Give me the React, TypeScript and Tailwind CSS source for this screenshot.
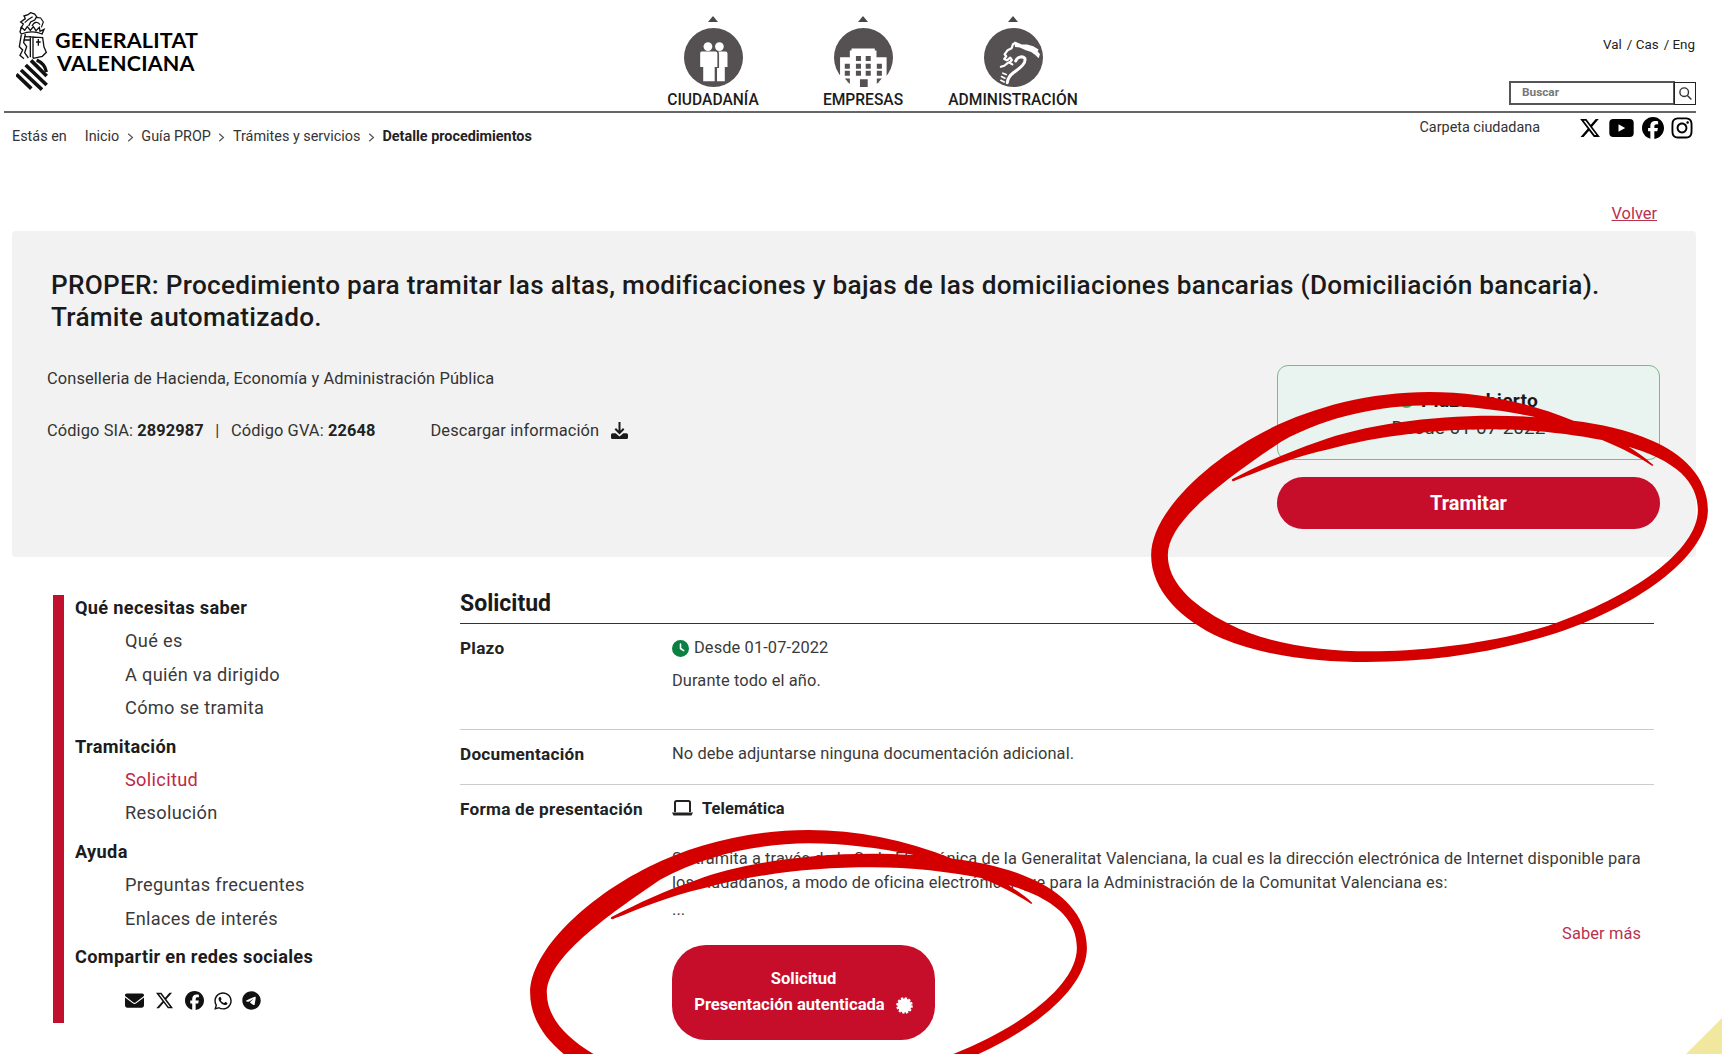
import type { ReactNode } from "react";
import {
  FaClock,
  FaEnvelope,
  FaFacebook,
  FaInstagram,
  FaTelegram,
  FaWhatsapp,
  FaXTwitter,
} from "react-icons/fa6";

const sections = [
  { title: "Qué necesitas saber", items: ["Qué es", "A quién va dirigido", "Cómo se tramita"] },
  { title: "Tramitación", items: ["Solicitud", "Resolución"] },
  { title: "Ayuda", items: ["Preguntas frecuentes", "Enlaces de interés"] },
];

function Crest() {
  return (
    <svg width={32} height={80} viewBox="0 0 96 240" fill="none" stroke="#111" strokeWidth={4}>
      {/* helmet with the winged dragon */}
      <path d="M14 50 22 36 14 30 28 20 24 12 36 8 44 2 56 6 62 14 56 24 44 30 38 42" />
      <path d="M26 32 38 22 50 14M60 16 74 18 82 30 76 46M48 42C54 28 66 28 72 38" strokeWidth={3.5} />
      <path d="M12 60 16 46 26 55 34 44 43 55 52 44 60 56 70 46 72 58 84 52 78 66C56 56 36 58 16 66Z" strokeWidth={4} />
      {/* mantle */}
      <path d="M16 68 10 104 20 114 12 130 24 140M28 66 23 92 32 104 26 122 37 138" />
      <path d="M43 72V136M51 72V139M26 74 80 77 84 105 91 121 79 133 51 139M23 84H43" />
      <path d="M67 81V101M60 90H74" strokeWidth={4} />
      {/* shield bars */}
      <path d="M45 145 92 192M29 159 92 219M15 174 78 233M1 187 46 230" strokeWidth={11} />
      <path d="M62 144C78 151 88 162 91 180" strokeWidth={10} />
    </svg>
  );
}

function PeopleIcon() {
  return (
    <svg width={59} height={59} viewBox="0 0 175 175">
      <circle cx={87.5} cy={87.5} r={87.5} fill="#555152" />
      <g fill="#fff">
        <circle cx={71} cy={55} r={13} />
        <circle cx={105} cy={55} r={13} />
        <path d="M52 70h41q6 0 6 6v40h-8v42H57v-42h-9V75q0-5 4-5ZM102 70h21q6 0 6 6v40h-8v42H98v-39h6V79q0-6-2-9Z" />
      </g>
    </svg>
  );
}

function BuildingIcon() {
  return (
    <svg width={59} height={59} viewBox="0 0 175 175">
      <circle cx={87.5} cy={87.5} r={87.5} fill="#555152" />
      <path d="M18 87H47V67H52V61H121V67H126V87H156V160H132V175H43V160H18Z" fill="#fff" />
      <path
        d="M32 106h15v15H32zM65 83h15v15H65zM94 83h15v15H94zM65 106h15v15H65zM94 106h15v15H94zM127 106h15v15H127zM32 127h15v15H32zM65 127h15v15H65zM94 127h15v15H94zM127 127h15v15H127zM32 150h15v16zM127 150h15l-15 16zM77 152h23v23H77z"
        fill="#555152"
      />
    </svg>
  );
}

function DragonIcon() {
  return (
    <svg width={59} height={59} viewBox="0 0 175 175">
      <circle cx={87.5} cy={87.5} r={87.5} fill="#555152" />
      <path
        d="M90 40 100 44 112 49 128 49 146 54 162 64 159 69 166 78 162 90 153 81 140 71 124 66 106 58 92 56Z"
        fill="#fff"
      />
      <g fill="none" stroke="#fff" strokeWidth={6.5} strokeLinejoin="round" strokeLinecap="round">
        <path d="M93 44 86 48 82 60 70 66 61 78 66 84 60 92 68 96 78 88 83 95 76 102" />
        <path d="M70 104 60 112 50 115M74 102 84 108" />
        <path
          d="M94 98C98 86 114 82 121 90 126 104 106 120 88 132 76 141 70 150 69 162"
          strokeWidth={9}
        />
        <path d="M56 134 66 138M52 144 62 149M50 155 60 160" strokeWidth={5} />
      </g>
    </svg>
  );
}

function YoutubeIcon({ className }: { className: string }) {
  return (
    <svg width={25} height={18} viewBox="0 0 25 18" className={className}>
      <rect x={0.3} width={24.4} height={18} rx={4} fill="currentColor" />
      <path d="M9.5 5.200 16.200 9 9.500 12.800Z" fill="#fff" />
    </svg>
  );
}

function Audience({ label, icon, className }: { label: string; icon: ReactNode; className: string }) {
  return (
    <a href="#" className={`flex flex-col items-center ${className}`}>
      <svg width={10} height={6} viewBox="0 0 10 6" className="mb-1.5">
        <path d="M5 0 10 6H0Z" fill="#4a4748" />
      </svg>
      {icon}
      <span className="mt-[3px] text-[15.6px] leading-5 font-medium whitespace-nowrap">{label}</span>
    </a>
  );
}

/* Hand-drawn marker loop */
function MarkerLoop({ className }: { className: string }) {
  return (
    <svg
      width={582}
      height={330}
      viewBox="0 0 1568 990"
      preserveAspectRatio="none"
      className={`pointer-events-none absolute ${className}`}
    >
      <path
        fill="#d40000"
        d="M1383 345C1330 290 1240 240 1168 212C1040 155 910 126 780 126C620 126 470 170 350 236C180 330 30 490 30 615C30 720 110 810 220 865C340 920 480 936 610 936C800 936 960 905 1120 850C1360 760 1530 610 1530 480C1530 380 1460 310 1380 272C1310 237 1240 222 1168 212C1090 202 1020 197 950 197C780 197 600 225 480 275C400 305 320 345 248 388C246 393 250 396 258 391C320 365 400 325 500 300C650 255 800 238 950 238C1060 238 1160 252 1245 270L1300 285C1450 330 1503 400 1503 480C1503 600 1330 740 1100 827C950 880 760 904 620 904C480 904 340 880 240 822C130 760 75 690 75 615C75 510 235 385 380 275C510 196 650 167 780 166C870 166 970 180 1060 200C1140 225 1200 245 1245 270C1300 295 1350 325 1380 348Z"
      />
    </svg>
  );
}

function Header() {
  return (
    <header className="ml-1 flex h-[113px] w-[1692px] border-b-2 border-[#666]">
      <div className="ml-3 flex w-[190px] items-start pt-3">
        <Crest />
        <p className="mt-[17px] ml-[7px] font-[Lato] text-[21.5px] leading-[23px] font-bold tracking-[0.2px] whitespace-nowrap text-black">
          GENERALITAT
          <br />
          <span className="ml-0.5">VALENCIANA</span>
        </p>
      </div>
      <nav className="ml-[461px] flex pt-4 text-[#1c1c1c]">
        <Audience label="CIUDADANÍA" icon={<PeopleIcon />} className="w-[92px]" />
        <Audience label="EMPRESAS" icon={<BuildingIcon />} className="ml-[63px] w-[82px]" />
        <Audience label="ADMINISTRACIÓN" icon={<DragonIcon />} className="ml-[44px] w-[130px]" />
      </nav>
      <div className="ml-auto flex flex-col items-end pt-[35px]">
        <p className="mr-px flex gap-[5px] text-[13.4px] leading-5 text-[#222]">
          <span>Val</span>
          <span>/ Cas</span>
          <span>/ Eng</span>
        </p>
        <div className="mt-[26px] flex">
          <div className="h-[24px] w-[166px] border-2 border-[#555] pl-[11px] text-[11.8px] leading-[19px] font-bold text-[#777]">
            Buscar
          </div>
          <div className="-ml-px mt-px grid h-[23px] w-[22px] place-items-center border border-[#222]">
            <svg width={13} height={13} viewBox="0 0 13 13" fill="none" stroke="#333" strokeWidth={1.4}>
              <circle cx={5.2} cy={5.2} r={4.3} />
              <path d="M8.4 8.4 12.4 12.4" />
            </svg>
          </div>
        </div>
      </div>
    </header>
  );
}

function Chevron() {
  return (
    <svg width={7} height={9} viewBox="0 0 7 9" fill="none" stroke="#555" strokeWidth={1.2} className="mx-[7.5px] mt-[7px]">
      <path d="M1.2 .7 5.5 4.5 1.2 8.3" />
    </svg>
  );
}

function Breadcrumb() {
  return (
    <div className="mr-[28px] ml-3 flex h-[118px] justify-between text-[#333]">
      <p className="flex pt-[13px] text-[14.4px] leading-[21px] whitespace-nowrap">
        <span>Estás en</span>
        <span className="ml-[18px]">Inicio</span>
        <Chevron />
        <span>Guía PROP</span>
        <Chevron />
        <span>Trámites y servicios</span>
        <Chevron />
        <strong className="font-bold text-[#222]">Detalle procedimientos</strong>
      </p>
      <div className="flex flex-col items-end">
        <div className="flex items-start">
          <span className="mt-[4px] mr-[39px] text-[14.4px] leading-[21px]">Carpeta ciudadana</span>
          <div className="mt-[3px] flex items-center text-black">
            <FaXTwitter size={22} />
            <YoutubeIcon className="ml-2" />
            <FaFacebook size={22} className="ml-2" />
            <FaInstagram size={24} className="ml-[6px]" />
          </div>
        </div>
        <a href="#" className="mt-[62px] mr-[37px] text-[16.4px] leading-6 text-[#b8324e] underline">
          Volver
        </a>
      </div>
    </div>
  );
}

function Summary() {
  return (
    <section className="ml-3 flex h-[326px] w-[1684px] flex-col rounded-[4px] bg-[#f2f2f2] pr-9 pl-[35px]">
      <h1 className="mt-[38px] ml-1 text-[26.2px] leading-[32.3px] font-medium tracking-[0.27px] whitespace-nowrap text-[#1a1a1a]">
        PROPER: Procedimiento para tramitar las altas, modificaciones y bajas de las domiciliaciones
        bancarias (Domiciliación bancaria).
        <br />
        Trámite automatizado.
      </h1>
      <div className="flex justify-between">
        <div className="pt-[33px] text-[16.4px] leading-6 tracking-[0.11px] text-[#333]">
          <p>Conselleria de Hacienda, Economía y Administración Pública</p>
          <p className="mt-[28px] flex whitespace-nowrap">
            <span>
              Código SIA: <strong className="font-bold text-[#222]">2892987</strong>
            </span>
            <span className="mx-[11.5px]">|</span>
            <span>
              Código GVA: <strong className="font-bold text-[#222]">22648</strong>
            </span>
            <span className="ml-[55px]">Descargar información</span>
            <svg width={17} height={17} viewBox="0 0 17 17" className="mt-[3px] ml-3">
              <path d="M8.5 0V11M4.3 6.8 8.5 11 12.7 6.8" fill="none" stroke="#1a1a1a" strokeWidth={2} />
              <path
                d="M1.5 11.2H4.6L8.5 14.6 12.4 11.2H15.5Q17 11.2 17 12.7V15.5Q17 17 15.5 17H1.5Q0 17 0 15.5V12.7Q0 11.2 1.5 11.2Z"
                fill="#1a1a1a"
              />
            </svg>
          </p>
        </div>
        <div className="mt-[31px] w-[383px]">
          <div className="flex h-[95px] flex-col items-center rounded-[11px] border border-[#74bd85] bg-[#e9f3f0] pt-[21px]">
            <p className="flex items-center text-[19.2px] leading-7 font-bold tracking-[0.25px] text-[#1a1a1a]">
              <FaClock size={15} className="mr-[7px] text-[#3dbb5c]" />
              Plazo abierto
            </p>
            <p className="text-[19px] leading-[26px] text-[#333]">Desde 01-07-2022</p>
          </div>
          <button className="mt-[17px] block h-[52px] w-full rounded-full bg-[#c60d29] text-[20px] leading-[50px] font-bold text-white">
            Tramitar
          </button>
        </div>
      </div>
    </section>
  );
}

function Sidebar() {
  return (
    <aside className="mt-[38px] ml-[53px] h-[428px] w-[350px] border-l-[11px] border-[#c0102e] text-[18.2px] leading-[33.3px] tracking-[0.32px]">
      {sections.map((s) => (
        <div key={s.title} className="mb-[5.5px] pl-[11px] first:-mt-[4px]">
          <h3 className="font-bold text-[#1c1c1c]">{s.title}</h3>
          {s.items.map((item) => (
            <a
              key={item}
              href="#"
              className={`block pl-[50px] ${item === "Solicitud" ? "text-[#bd2846]" : "text-[#3a3a3a]"}`}
            >
              {item}
            </a>
          ))}
        </div>
      ))}
      <h3 className="pl-[11px] font-bold text-[#1c1c1c]">Compartir en redes sociales</h3>
      <div className="mt-[17px] flex items-center pl-[61px] text-[#111]">
        <FaEnvelope size={19} />
        <FaXTwitter size={19} className="ml-[11px]" />
        <FaFacebook size={19} className="ml-[11px]" />
        <FaWhatsapp size={20} className="ml-[9px]" />
        <FaTelegram size={19} className="ml-[9px]" />
      </div>
    </aside>
  );
}

function Row({ label, className, children }: { label: string; className: string; children: ReactNode }) {
  return (
    <div className={`flex ${className}`}>
      <h3 className="w-[212px] shrink-0 text-[17.2px] leading-6 font-bold tracking-[0.25px] text-[#222]">
        {label}
      </h3>
      <div className="grow text-[16.4px] leading-6 tracking-[0.11px] text-[#3a3a3a]">{children}</div>
    </div>
  );
}

function Details() {
  return (
    <main className="ml-[57px] w-[1194px] pt-[31px]">
      <h2 className="h-[36px] border-b border-[#333] text-[23px] leading-[31px] font-bold text-[#1a1a1a]">
        Solicitud
      </h2>
      <Row label="Plazo" className="h-[106px] border-b border-[#ccc] pt-3">
        <p className="flex items-center">
          <FaClock size={17} className="mr-[5px] text-[#0a8043]" />
          Desde 01-07-2022
        </p>
        <p className="mt-[9px]">Durante todo el año.</p>
      </Row>
      <Row label="Documentación" className="h-[55px] border-b border-[#ccc] pt-3">
        No debe adjuntarse ninguna documentación adicional.
      </Row>
      <Row label="Forma de presentación" className="pt-3">
        <p className="flex font-bold text-[#222]">
          <svg width={21} height={16} viewBox="0 0 21 16" fill="none" className="mt-[3px] mr-[9px]">
            <path d="M3 12V2.5Q3 1 4.5 1H16.5Q18 1 18 2.5V12" stroke="#222" strokeWidth={2} />
            <path d="M0 12.5H21L19.5 15.5H1.5Z" fill="#222" />
          </svg>
          Telemática
        </p>
        <p className="mt-[26px] whitespace-nowrap">
          Se tramita a través de la Sede Electrónica de la Generalitat Valenciana, la cual es la
          dirección electrónica de Internet disponible para
          <br />
          los ciudadanos, a modo de oficina electrónica, que para la Administración de la Comunitat
          Valenciana es:
        </p>
        <p className="mt-[2.5px]">...</p>
        <a href="#" className="mr-[13px] block text-right text-[#b8324e]">
          Saber más
        </a>
        <button className="-mt-px block h-[95px] w-[263px] rounded-[34px] bg-[#c60d29] text-[16.6px] leading-[26px] font-bold tracking-normal text-white">
          Solicitud
          <span className="flex items-center justify-center">
            Presentación autenticada
            <SealIcon />
          </span>
        </button>
      </Row>
    </main>
  );
}

function SealIcon() {
  return (
    <svg width={17} height={17} viewBox="0 0 18 18" className="ml-[11px]">
      <circle cx={9} cy={9} r={7.4} fill="#fff" />
      <circle cx={9} cy={9} r={7.6} fill="none" stroke="#fff" strokeWidth={2.4} strokeDasharray="2.4 1.58" />
    </svg>
  );
}

export default function App() {
  return (
    <div className="relative h-[1054px] w-[1722px] overflow-hidden bg-white font-[Roboto,sans-serif]">
      <Header />
      <Breadcrumb />
      <Summary />
      <div className="flex">
        <Sidebar />
        <Details />
      </div>
      <MarkerLoop className="top-[350px] left-[1140px]" />
      <MarkerLoop className="top-[788px] left-[519px]" />
      <svg width={36} height={36} className="absolute right-0 bottom-0">
        <path d="M36 0V36H0Z" fill="#f2e79f" />
      </svg>
    </div>
  );
}
